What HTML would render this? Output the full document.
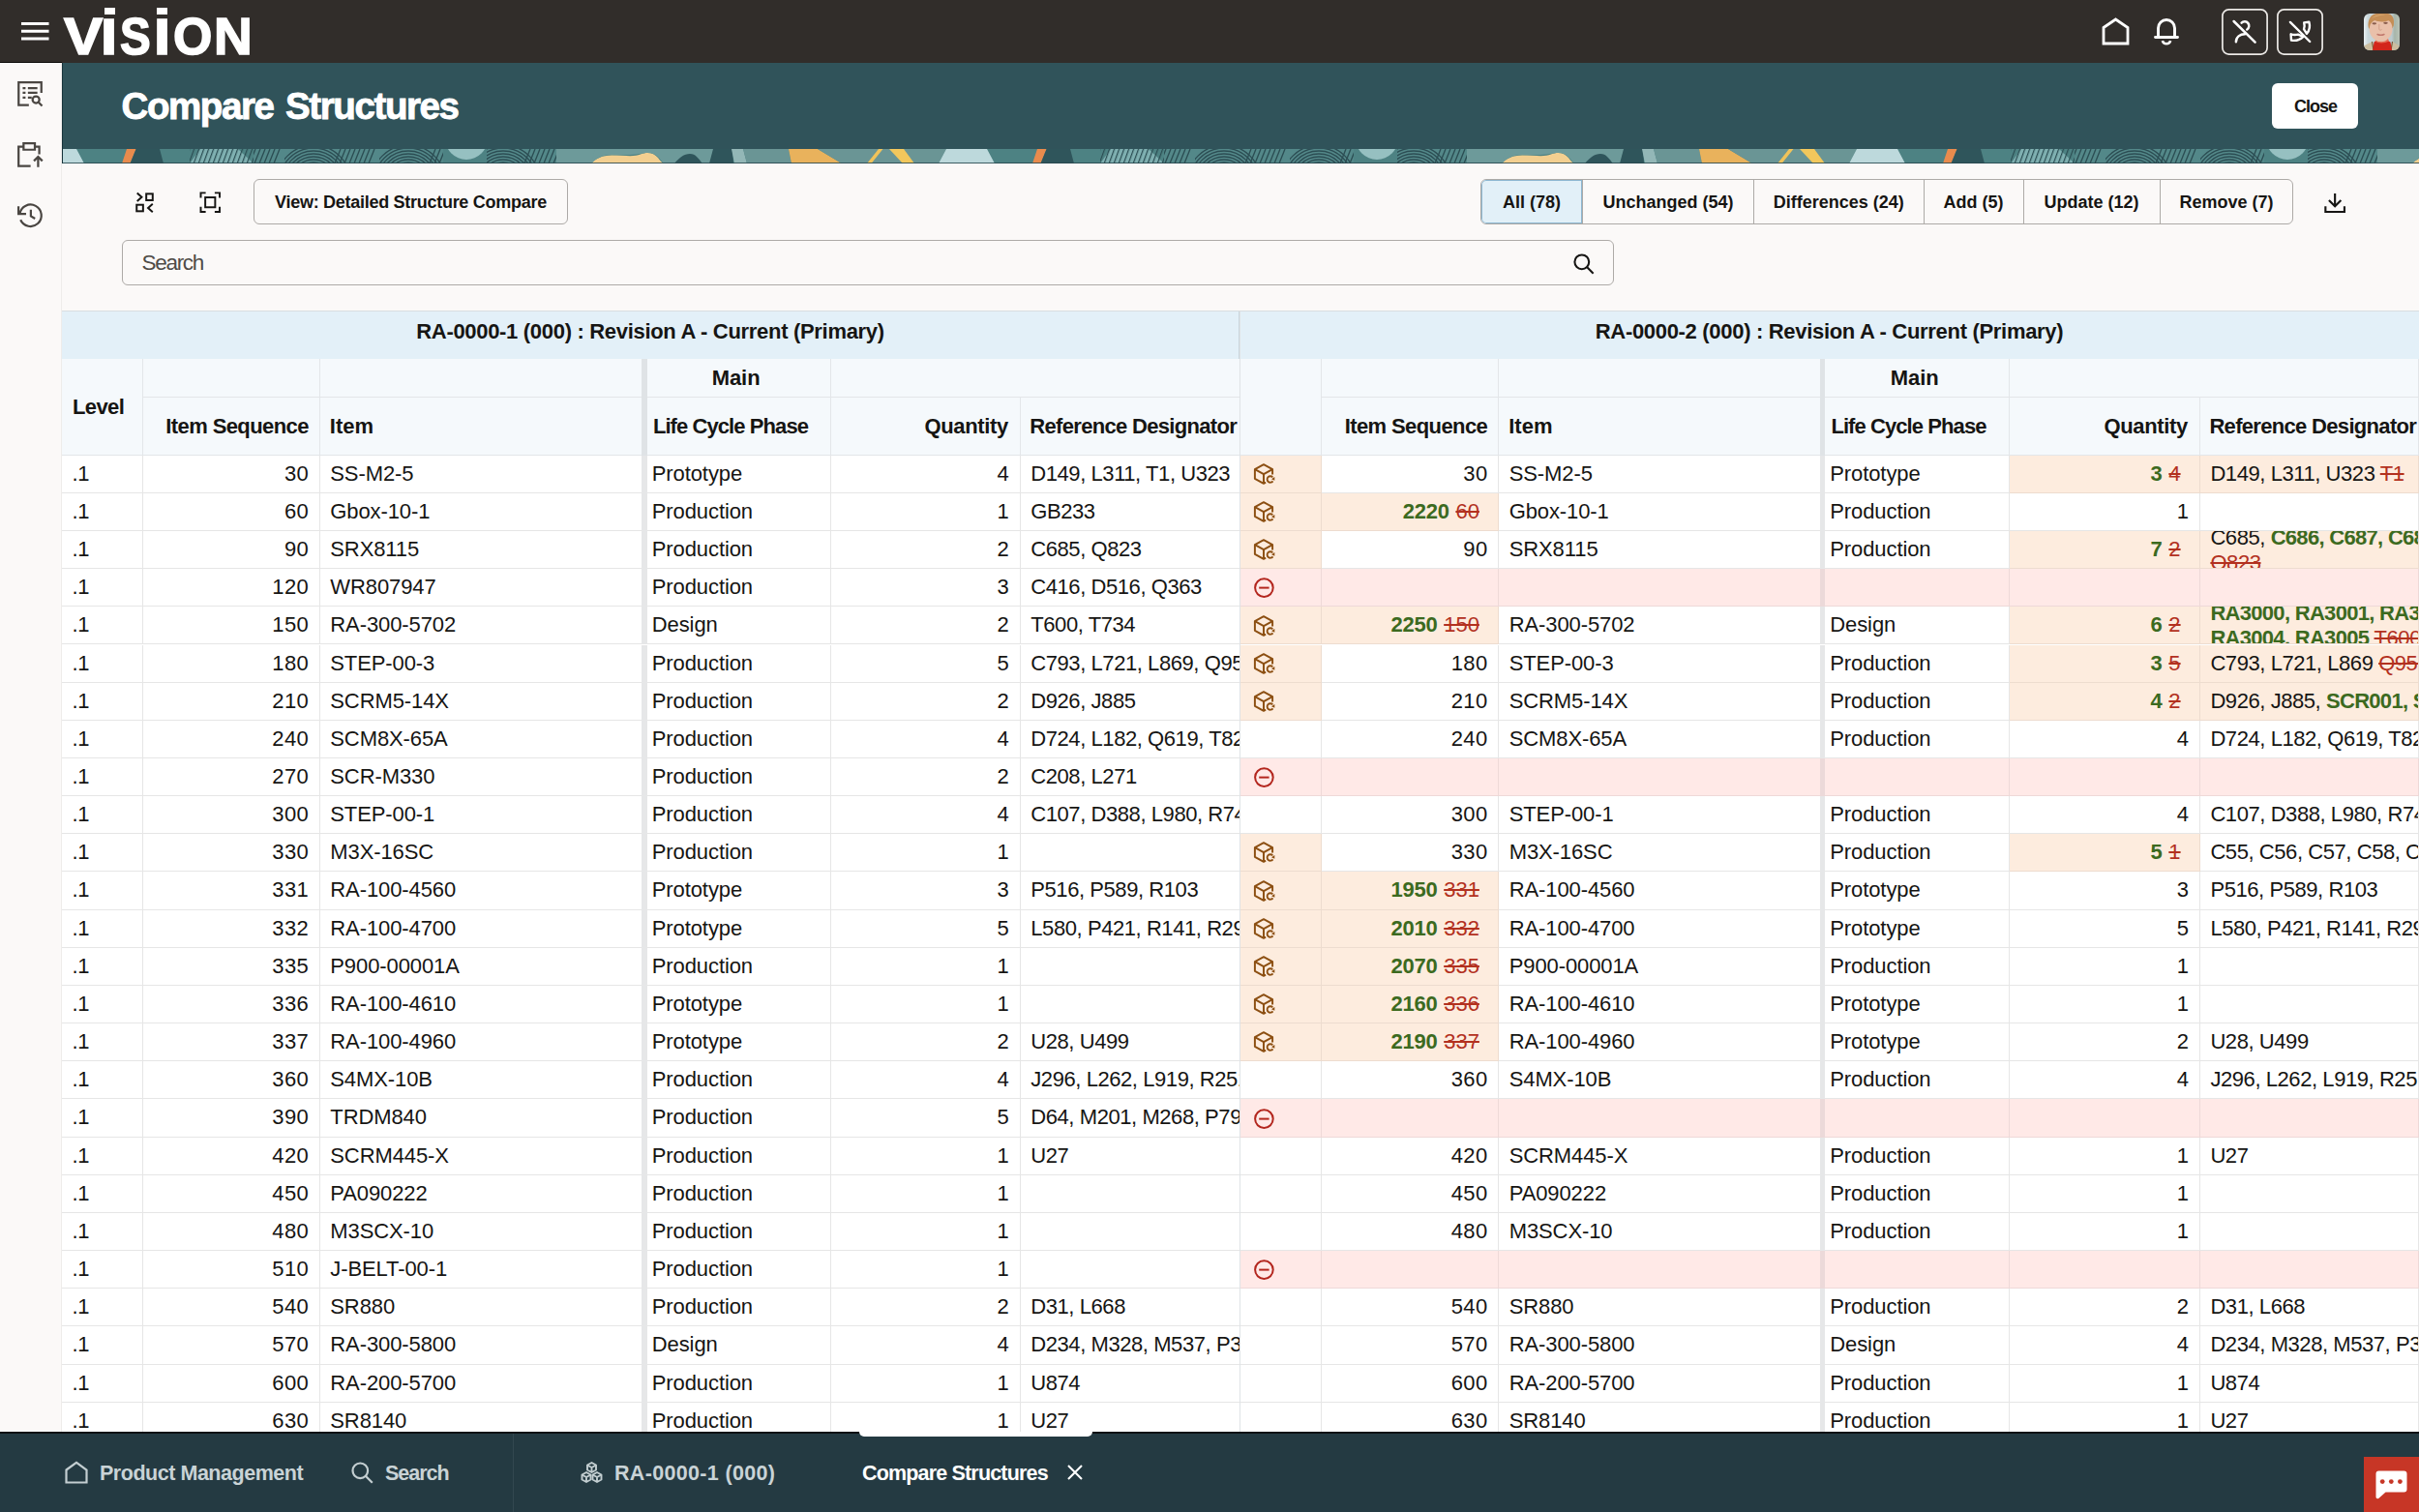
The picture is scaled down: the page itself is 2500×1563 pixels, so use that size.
<!DOCTYPE html>
<html lang="en">
<head>
<meta charset="utf-8">
<title>Compare Structures</title>
<style>
*{box-sizing:border-box;margin:0;padding:0}
html,body{width:2500px;height:1563px;overflow:hidden;background:#fbf9f8}
body{position:relative;font-family:"Liberation Sans",sans-serif;color:#161513;font-size:22px}
.abs{position:absolute}
svg{display:block;overflow:visible}
/* top bar */
#top{left:0;top:0;width:2500px;height:65px;background:#312d2a}
#logo span{position:absolute;top:0;font-weight:700;font-size:54px;line-height:54px;color:#fff;transform-origin:0 0;-webkit-text-stroke:1.6px #fff}
#logo i{position:absolute;background:#fff;display:block}
.tbtn{position:absolute;top:9px;width:48px;height:48px}
/* sidebar */
#side{left:0;top:65px;width:64px;height:1416px;background:#fbf9f8;border-right:1px solid #eeecea}
/* header */
#hdr{left:64px;top:65px;width:2436px;height:89px;background:#30535a}
#hdr h1{position:absolute;left:61.5px;top:24.600px;font-size:38.5px;line-height:40px;font-weight:700;color:#fff;letter-spacing:-1.400px;word-spacing:3.200px;white-space:nowrap;-webkit-text-stroke:0.900px #fff}
#close{position:absolute;left:2348px;top:86px;width:89px;height:47px;background:#fff;border-radius:6px;font-size:18px;font-weight:700;display:flex;align-items:center;justify-content:center;letter-spacing:-1px;padding-left:1px;padding-top:2px}
#strip{left:64px;top:154px;width:2436px;height:15px;overflow:hidden}
/* toolbar */
.btn{position:absolute;border:1px solid #adaaa7;border-radius:6px;display:flex;align-items:center;justify-content:center;font-weight:700;font-size:18px;letter-spacing:-0.28px;white-space:nowrap;background:#fbf9f8}
#seg{left:1530px;top:185px;height:47px;width:840px;border:1px solid #adaaa7;border-radius:6px;overflow:hidden;display:block}
#seg div{position:absolute;top:0;height:45px;padding-top:1.500px;display:flex;align-items:center;justify-content:center;font-weight:700;font-size:18px;letter-spacing:0;border-left:1px solid #adaaa7;white-space:nowrap}
#seg div:first-child{border-left:0;background:#e2f0f8;box-shadow:inset 0 0 0 1px #8db7d1;border-radius:5px 0 0 5px}
#search{left:126px;top:248px;width:1542px;height:47px;border:1px solid #adaaa7;border-radius:6px;background:#fbf9f8}
#search span{position:absolute;left:19.500px;top:0;line-height:45px;font-size:22.500px;color:#4f4b47;letter-spacing:-1.300px}
/* table */
#tbl{left:64px;top:321px;width:2436px;height:1160px;background:#fff;overflow:hidden}
.t1{position:absolute;top:321px;height:50px;background:#e3f0f8;font-weight:700;font-size:22px;letter-spacing:-0.31px;display:flex;align-items:center;justify-content:center;white-space:nowrap;padding-bottom:7px}
.h{position:absolute;background:#f5f9fc;border-right:1px solid #e3e6e9;border-bottom:1px solid #e3e6e9;font-weight:700;font-size:22px;letter-spacing:-0.6px;display:flex;align-items:center;white-space:nowrap;overflow:hidden;padding:0 11px;z-index:2}
.h.n{justify-content:flex-end}
.h.ctr{justify-content:center}
.hd{position:absolute;background:#dfe3e6;z-index:2}
.row{position:absolute;left:0;width:2500px;height:39.16px}
.c{position:absolute;top:0;height:39.16px;border-right:1px solid #e6e6e6;border-bottom:1px solid #e6e6e6;background:#fff;padding:0 10.5px;line-height:38.200px;white-space:nowrap;overflow:hidden;letter-spacing:-0.3px}
.c.n{text-align:right;padding-right:10.600px;letter-spacing:0.400px}
.c.dv{background:#e6e7e8;border:0;padding:0}
.c.dvp{background:#ecd9d9}
.c.o{background:#fdecde;border-color:#eddccf}
.c.p{background:#ffe9e7;border-color:#eed9d8}
.c.ico{padding:0}
.c.cl{padding-right:0;letter-spacing:-0.43px}
.c.lc{padding-left:5.100px;letter-spacing:-0.1px}
.c.it{letter-spacing:-0.1px;border-right:0}
.ic{position:absolute;left:12.1px;top:7.2px;width:24px;height:24px}
.g{color:#3c6a1f;font-weight:700;letter-spacing:-0.7px}
.c.n .g{letter-spacing:-0.300px;margin-right:0.300px}
.c.n .r{letter-spacing:0}
.c.n.o{padding-right:19.3px}
.r{color:#b3311f;text-decoration:line-through;text-decoration-thickness:1.5px}
.wr{display:block;line-height:26px;margin-top:-6px;white-space:nowrap}
/* bottom bar */
#bot{left:0;top:1480px;width:2500px;height:83px;background:#243a42;border-top:2px solid #0c1114}
#bot .t{position:absolute;top:29px;font-weight:700;font-size:21.5px;line-height:24px;color:#c9d3d6;letter-spacing:-0.47px;white-space:nowrap}
#chat{left:2443px;top:1506px;width:57px;height:57px;background:#c73626}
</style>
</head>
<body>
<svg width="0" height="0" style="position:absolute">
 <defs>
  <g id="i-upd" fill="none" stroke="#8c4f12" stroke-width="1.95" stroke-linejoin="round" stroke-linecap="butt">
   <path d="M21.100 12.600V7.200L12 2.200 2.900 7.200v9.600L12 21.800l2.100-1.150"/>
   <path d="M2.900 7.200L12 12.200l9.100-5M12 12.200v9.600"/>
   <path d="M21.300 15.300A3.250 3.250 0 1 0 21.500 19.400" stroke-width="1.850"/>
   <path d="M23.300 14.900v3.900l-3.300-1.500z" fill="#8c4f12" stroke="none"/>
  </g>
  <g id="i-rem" fill="none" stroke="#b3261e" stroke-width="2">
   <circle cx="12.400" cy="12.600" r="9.300"/>
   <path d="M7.200 12.600h10.400"/>
  </g>
 </defs>
</svg>

<!-- TOP BAR -->
<div id="top" class="abs">
 <svg class="abs" style="left:22px;top:22px" width="29" height="20" viewBox="0 0 29 20"><path d="M0 2.5h28.5M0 10.3h28.5M0 18h28.5" stroke="#fff" stroke-width="3" fill="none"/></svg>
 <div id="logo" class="abs" style="left:0;top:0">
  <span style="left:66px;top:9.500px;transform:scaleX(1.116)">V</span>
  <span style="left:104.200px;top:10.500px;transform:scaleX(1.170);font-size:52.500px">I</span>
  <span style="left:124.300px;top:9.500px;transform:scaleX(0.880)">S</span>
  <span style="left:159px;top:10.500px;transform:scaleX(1.170);font-size:52.500px">I</span>
  <span style="left:178.800px;top:9.500px;transform:scaleX(0.960)">O</span>
  <span style="left:221.300px;top:9.500px;transform:scaleX(1.020)">N</span>
  <i style="left:108.2px;top:8px;width:11px;height:7px"></i>
  <i style="left:162px;top:8px;width:11px;height:7px"></i>
 </div>
 <!-- home -->
 <svg class="abs" style="left:2171px;top:17px" width="31" height="31" viewBox="0 0 31 31"><path d="M3 11.5L15.5 3 28 11.5V28H3z" fill="none" stroke="#fff" stroke-width="2.800" stroke-linejoin="miter"/></svg>
 <!-- bell -->
 <svg class="abs" style="left:2225px;top:16px" width="28" height="32" viewBox="0 0 28 32"><path d="M2.5 22.5h23M5.5 22V13a8.5 8.5 0 0 1 17 0v9" fill="none" stroke="#fff" stroke-width="2.900" stroke-linecap="round"/><path d="M9.8 26.2a4.4 4.4 0 0 0 8.4 0" fill="none" stroke="#fff" stroke-width="2.600"/></svg>
 <div class="tbtn" style="left:2296px">
  <svg class="abs" style="left:0;top:0" width="48" height="48" viewBox="0 0 48 48"><rect x="0.900" y="0.900" width="46.200" height="46.200" rx="6.500" fill="none" stroke="#ece9e6" stroke-width="1.700"/><g fill="none" stroke="#fff" stroke-width="2.500" stroke-linecap="round"><path d="M20.600 14.600A4.500 4.500 0 1 1 26.300 21.500"/><path d="M14.900 34.200C14.900 29.200 19 26.300 24 26.300"/><path d="M12.600 13L34.600 34.600"/></g></svg>
 </div>
 <div class="tbtn" style="left:2353px">
  <svg class="abs" style="left:0;top:0" width="48" height="48" viewBox="0 0 48 48"><rect x="0.900" y="0.900" width="46.200" height="46.200" rx="6.500" fill="none" stroke="#ece9e6" stroke-width="1.700"/><g fill="none" stroke="#fff" stroke-width="2.400" stroke-linecap="round" stroke-linejoin="round"><path d="M28.200 14.400L33.400 13.700C34.600 18 33.600 22.600 31 25.800L28 21.200C28.800 19 28.800 16.600 28.200 14.400Z"/><path d="M14.600 26.300L15 32.600C19.600 33.400 24.200 32 27.400 28.800L22 26.600C19.600 27.200 17 27.200 14.600 26.300Z"/><path d="M13.900 13.900L34.200 34"/></g></svg>
 </div>
 <!-- avatar -->
 <svg class="abs" style="left:2443px;top:14px" width="37" height="38" viewBox="0 0 37 38">
  <defs><clipPath id="av"><rect width="37" height="38" rx="6"/></clipPath>
  <linearGradient id="avb" x1="0" x2="1" y1="0" y2="0"><stop offset="0" stop-color="#e9eff1"/><stop offset="0.120" stop-color="#c9d7db"/><stop offset="0.780" stop-color="#bccbcf"/><stop offset="0.860" stop-color="#a7b5aa"/><stop offset="1" stop-color="#b9c3b6"/></linearGradient></defs>
  <g clip-path="url(#av)">
   <rect width="37" height="38" fill="url(#avb)"/>
   <path d="M0 38v-4.500l8.500-4.500 3 9zM37 38v-4.500l-7.500-4.500-2.500 9z" fill="#cbbd9f"/>
   <path d="M8.500 29l1.500 9M29.500 29l-1.500 9" stroke="#7a5636" stroke-width="1.200" fill="none"/>
   <path d="M9.200 38l1.300-8.500 4.500-2.500h7.500l5 2.500 1.500 8.500z" fill="#d3251b"/>
   <path d="M11.500 28.500c3 2.500 10 2.500 14.500 0l-1-2.500h-12z" fill="#e66a54"/>
   <path d="M12.500 22h11v5.500c-3 2.200-8 2.200-11 0z" fill="#dca58e"/>
   <ellipse cx="17.600" cy="15.500" rx="12" ry="13.300" fill="#e9c0aa"/>
   <path d="M4.800 14.500C3.500 7 7 0.500 13 0h12c4.500 1 7 5 5.800 12.500l-1.300 3c0-4-1.500-7-4-8.300-4 1.500-10 1.800-14-0.200-3.500 1.500-5.500 4-5.700 9z" fill="#c58e56"/>
   <path d="M8 5c3-3.500 9-4.500 14-3.500-5 0-10 1.500-14 3.500z" fill="#ddb07a"/>
   <ellipse cx="10.800" cy="10.300" rx="2.300" ry="1.100" fill="#8a5e4e"/><ellipse cx="22.500" cy="9.800" rx="2.300" ry="1.100" fill="#8a5e4e"/>
   <path d="M15.800 11v5.500c0.800 0.800 2 0.800 2.800 0" fill="none" stroke="#d3a08a" stroke-width="1"/>
   <path d="M14 21.500c2 0.900 5 0.900 7 0" fill="none" stroke="#c27a6e" stroke-width="1.400" stroke-linecap="round"/>
  </g>
 </svg>
</div>

<div class="abs" style="left:0;top:64px;width:64px;height:1px;background:#0a0908"></div>
<div class="abs" style="left:64px;top:65px;width:1px;height:104px;background:#17343b;z-index:2"></div>
<!-- SIDEBAR -->
<div id="side" class="abs">
 <svg class="abs" style="left:17px;top:18px" width="28.600" height="28.400" viewBox="0 0 29 29"><g fill="none" stroke="#4a4642" stroke-width="2.3"><path d="M13 26.300H2.200V2.200h24v11"/><path d="M6.500 8.200h3M12 8.200h10M6.500 13.200h3M12 13.200h10M6.500 18.200h3M12 18.200h4"/><circle cx="20.500" cy="20.500" r="3.600"/><path d="M23.200 23.200l3.800 3.800"/></g></svg>
 <svg class="abs" style="left:17px;top:81px" width="28.300" height="28.200" viewBox="0 0 29 29"><g fill="none" stroke="#4a4642" stroke-width="2.300"><path d="M15 26.300H2.200V5.800h5M19.500 5.800h4.700V14"/><path d="M7.500 9V2.200h12V9z"/><path d="M23 27.500V17M18.500 21l4.500-4.500 4.500 4.500"/></g></svg>
 <svg class="abs" style="left:16.800px;top:142.500px" width="28.800" height="28.800" viewBox="0 0 30 30"><g fill="none" stroke="#4a4642" stroke-width="2.300"><path d="M3.600 13.500a11.700 11.700 0 1 1 0.800 6.500"/><path d="M2.200 5.500v8.200h8.200"/><path d="M15.500 9v7l4.500 2.800"/></g></svg>
</div>

<!-- HEADER -->
<div id="hdr" class="abs"><h1>Compare Structures</h1></div>
<div id="close">Close</div>
<div id="strip" class="abs"><svg width="2436" height="15" viewBox="0 0 2436 15"><defs><pattern id="hat" width="5" height="15" patternUnits="userSpaceOnUse" patternTransform="skewX(-20)"><rect x="0" y="0" width="1.300" height="15" fill="#2b4d53"/></pattern><pattern id="arc" width="98" height="15" patternUnits="userSpaceOnUse"><rect width="98" height="15" fill="#538889"/><g fill="none" stroke="#2b4d53" stroke-width="1.350"><circle cx="30" cy="34" r="20"/><circle cx="30" cy="34" r="23"/><circle cx="30" cy="34" r="26"/><circle cx="30" cy="34" r="29"/><circle cx="30" cy="34" r="32"/><circle cx="30" cy="34" r="35"/><circle cx="30" cy="34" r="38"/><path d="M58 0l-6 15"/><path d="M63 0l-6 15"/><path d="M68 0l-6 15"/><path d="M73 0l-6 15"/><path d="M78 0l-6 15"/><path d="M83 0l-6 15"/><path d="M88 0l-6 15"/><path d="M93 0l-6 15"/></g></pattern><g id="tl"><rect x="87" y="0" width="941" height="15" fill="#4d8283"/>
<polygon points="131.0,0.0 140.6,0.0 134.5,15.0 126.0,15.0" fill="#e88b4d"/>
<polygon points="140.6,0.0 165.0,0.0 169.0,15.0 134.5,15.0" fill="#2f555b"/>
<polygon points="207.0,0.0 246.0,0.0 262.0,15.0 196.0,15.0" fill="#7fb0b1"/>
<rect x="196" y="0" width="66" height="15" fill="url(#hat)"/>
<rect x="262" y="0" width="196" height="15" fill="url(#arc)"/>
<circle cx="482" cy="-11" r="22" fill="#96c0c1"/>
<rect x="503" y="0" width="72" height="15" fill="url(#arc)"/>
<rect x="575" y="0" width="40" height="15" fill="#6d9a9a"/>
<path d="M611 15C616 10 622 6.500 632 6.500C645 6.500 655 8.500 662 5.500C669 2.500 676 4 680 9C682 12 684 14 686 15Z" fill="#f3cf90"/>
<rect x="686" y="0" width="52" height="15" fill="#6d9a9a"/>
<path d="M615 0H686V15C682 10 677 3 668 4C660 5 652 7 632 6C622 6 616 10 611 15Z" fill="#6d9a9a"/>
<path d="M697 15C702 9 707 5 713 5C719 5 722 10 726 15Z" fill="#2f555b"/>
<polygon points="737.0,0.0 757.0,0.0 758.0,15.0 733.0,15.0" fill="#2f555b"/>
<polygon points="756.0,0.0 768.0,0.0 772.0,15.0 759.0,15.0" fill="#93b7b7"/>
<polygon points="768.0,0.0 815.0,0.0 818.0,15.0 772.0,15.0" fill="#6a9595"/>
<polygon points="815.0,0.0 845.0,0.0 870.0,15.0 818.0,15.0" fill="#e9b25c"/>
<polygon points="845.0,0.0 978.0,0.0 970.0,15.0 870.0,15.0" fill="#6a9595"/>
<polygon points="908.0,0.0 912.5,0.0 900.5,15.0 896.0,15.0" fill="#f0c35a"/>
<polygon points="919.0,0.0 934.0,0.0 945.0,15.0 933.0,15.0" fill="#f2c75c"/>
<polygon points="978.0,0.0 1020.0,0.0 1028.0,15.0 970.0,15.0" fill="#bdd9dc"/></g></defs><use href="#tl" x="-1005"/><use href="#tl" x="-64"/><use href="#tl" x="877"/><use href="#tl" x="1818"/><rect x="0" y="14" width="2436" height="1" fill="#27474d" opacity="0.85"/></svg></div>

<!-- TOOLBAR -->
<svg class="abs" style="left:139px;top:198.300px" width="21.500" height="22.700" viewBox="0 0 22 24"><g fill="none" stroke="#161513" stroke-width="2.100"><rect x="12.500" y="2.500" width="7" height="7"/><rect x="2" y="14.500" width="7" height="7"/><path d="M2.500 1.500l5 4.500-5 4.500M19.500 13.500l-5 4.500 5 4.500"/></g></svg>
<svg class="abs" style="left:205.800px;top:198.300px" width="22.500" height="22.300" viewBox="0 0 24 24"><g fill="none" stroke="#161513" stroke-width="2.100"><rect x="6.500" y="6.500" width="11" height="11"/><path d="M1.500 7V1.500H7M17 1.500h5.500V7M22.500 17v5.500H17M7 22.500H1.500V17"/></g></svg>
<div class="btn" style="left:262px;top:185px;width:325px;height:47px;padding-top:1.5px">View: Detailed Structure Compare</div>
<div id="seg" class="abs">
 <div style="left:0;width:104px">All (78)</div>
 <div style="left:104px;width:177px">Unchanged (54)</div>
 <div style="left:281px;width:175.500px">Differences (24)</div>
 <div style="left:456.500px;width:103px">Add (5)</div>
 <div style="left:559.500px;width:141px">Update (12)</div>
 <div style="left:700.500px;width:138px">Remove (7)</div>
</div>
<svg class="abs" style="left:2402.300px;top:198.600px" width="22.300" height="21.400" viewBox="0 0 25 24"><g fill="none" stroke="#161513" stroke-width="2.400"><path d="M12.500 1v14.500M5.500 9l7 7 7-7"/><path d="M1.500 16v6.500h22V16"/></g></svg>
<div id="search" class="abs"><span>Search</span>
 <svg class="abs" style="left:1498.500px;top:12.500px" width="21.800" height="21.800" viewBox="0 0 23 23"><g fill="none" stroke="#161513" stroke-width="2.200"><circle cx="9.300" cy="9.300" r="7.800"/><path d="M14.800 14.800l7 7"/></g></svg>
</div>

<!-- TABLE -->
<div id="tbl" class="abs"></div>
<div class="abs" style="left:64px;top:321px;width:2436px;height:1px;background:#d9dde0;z-index:3"></div>
<div class="t1" style="left:64px;width:1217px;border-right:1px solid #c9d6de">RA-0000-1 (000) : Revision A - Current (Primary)</div>
<div class="t1" style="left:1281px;width:1219px">RA-0000-2 (000) : Revision A - Current (Primary)</div>
<div class="h " style="left:64.0px;top:371.0px;width:84.0px;height:100.0px">Level</div>
<div class="h " style="left:148.0px;top:371.0px;width:182.8px;height:40.0px"></div>
<div class="h " style="left:330.8px;top:371.0px;width:332.3px;height:40.0px;border-right:0"></div>
<div class="h ctr" style="left:663.1px;top:371.0px;width:196.0px;height:40.0px;letter-spacing:-0.06px">Main</div>
<div class="h " style="left:859.1px;top:371.0px;width:422.8px;height:40.0px"></div>
<div class="h n" style="left:148.0px;top:411.0px;width:182.8px;height:60.0px">Item Sequence</div>
<div class="h " style="left:330.8px;top:411.0px;width:332.3px;height:60.0px;border-right:0;letter-spacing:0.04px;padding-left:10px">Item</div>
<div class="h " style="left:668.7px;top:411.0px;width:190.4px;height:60.0px;padding-left:6.200px;letter-spacing:-0.92px">Life Cycle Phase</div>
<div class="h n" style="left:859.1px;top:411.0px;width:195.7px;height:60.0px;letter-spacing:-0.36px;padding-right:12px">Quantity</div>
<div class="h " style="left:1054.8px;top:411.0px;width:227.1px;height:60.0px;padding-right:0;letter-spacing:-0.68px;padding-left:9.5px">Reference Designator</div>
<div class="hd" style="left:663.1px;top:371.0px;width:5.6px;height:100.0px"></div>
<div class="h " style="left:1281.9px;top:371.0px;width:84.1px;height:100.0px"></div>
<div class="h " style="left:1366.0px;top:371.0px;width:183.2px;height:40.0px"></div>
<div class="h " style="left:1549.2px;top:371.0px;width:331.9px;height:40.0px;border-right:0"></div>
<div class="h ctr" style="left:1881.1px;top:371.0px;width:196.3px;height:40.0px;letter-spacing:-0.06px">Main</div>
<div class="h " style="left:2077.4px;top:371.0px;width:422.6px;height:40.0px"></div>
<div class="h n" style="left:1366.0px;top:411.0px;width:183.2px;height:60.0px">Item Sequence</div>
<div class="h " style="left:1549.2px;top:411.0px;width:331.9px;height:60.0px;border-right:0;letter-spacing:0.04px;padding-left:10px">Item</div>
<div class="h " style="left:1886.2px;top:411.0px;width:191.2px;height:60.0px;padding-left:6.200px;letter-spacing:-0.92px">Life Cycle Phase</div>
<div class="h n" style="left:2077.4px;top:411.0px;width:196.5px;height:60.0px;letter-spacing:-0.36px;padding-right:12px">Quantity</div>
<div class="h " style="left:2273.9px;top:411.0px;width:226.1px;height:60.0px;padding-right:0;letter-spacing:-0.68px;padding-left:9.5px">Reference Designator</div>
<div class="hd" style="left:1881.1px;top:371.0px;width:5.1px;height:100.0px"></div>
<div class="abs" style="left:1281px;top:321px;width:1px;height:1159px;background:#dfe3e6;z-index:2"></div>

<div id="rows" class="abs" style="left:0;top:0;width:2500px;height:1481px;overflow:hidden">
<div class="row" style="top:470.70px">
<div class="c " style="left:64.0px;width:84.0px">.1</div>
<div class="c n" style="left:148.0px;width:182.8px">30</div>
<div class="c it" style="left:330.8px;width:332.3px">SS-M2-5</div>
<div class="c dv" style="left:663.1px;width:5.6px"></div>
<div class="c lc" style="left:668.7px;width:190.4px">Prototype</div>
<div class="c n" style="left:859.1px;width:195.7px">4</div>
<div class="c cl" style="left:1054.8px;width:227.1px">D149, L311, T1, U323</div>
<div class="c ico o" style="left:1281.9px;width:84.1px"><svg class="ic" viewBox="0 0 24 24"><use href="#i-upd"/></svg></div>
<div class="c n" style="left:1366.0px;width:183.2px">30</div>
<div class="c it" style="left:1549.2px;width:331.9px">SS-M2-5</div>
<div class="c dv" style="left:1881.1px;width:5.1px"></div>
<div class="c lc" style="left:1886.2px;width:191.2px">Prototype</div>
<div class="c n o" style="left:2077.4px;width:196.5px"><b class="g">3</b> <s class="r">4</s></div>
<div class="c cl o" style="left:2273.9px;width:226.1px">D149, L311, U323 <s class="r">T1</s></div>
</div>
<div class="row" style="top:509.86px">
<div class="c " style="left:64.0px;width:84.0px">.1</div>
<div class="c n" style="left:148.0px;width:182.8px">60</div>
<div class="c it" style="left:330.8px;width:332.3px">Gbox-10-1</div>
<div class="c dv" style="left:663.1px;width:5.6px"></div>
<div class="c lc" style="left:668.7px;width:190.4px">Production</div>
<div class="c n" style="left:859.1px;width:195.7px">1</div>
<div class="c cl" style="left:1054.8px;width:227.1px">GB233</div>
<div class="c ico o" style="left:1281.9px;width:84.1px"><svg class="ic" viewBox="0 0 24 24"><use href="#i-upd"/></svg></div>
<div class="c n o" style="left:1366.0px;width:183.2px"><b class="g">2220</b> <s class="r">60</s></div>
<div class="c it" style="left:1549.2px;width:331.9px">Gbox-10-1</div>
<div class="c dv" style="left:1881.1px;width:5.1px"></div>
<div class="c lc" style="left:1886.2px;width:191.2px">Production</div>
<div class="c n" style="left:2077.4px;width:196.5px">1</div>
<div class="c cl" style="left:2273.9px;width:226.1px"></div>
</div>
<div class="row" style="top:549.02px">
<div class="c " style="left:64.0px;width:84.0px">.1</div>
<div class="c n" style="left:148.0px;width:182.8px">90</div>
<div class="c it" style="left:330.8px;width:332.3px">SRX8115</div>
<div class="c dv" style="left:663.1px;width:5.6px"></div>
<div class="c lc" style="left:668.7px;width:190.4px">Production</div>
<div class="c n" style="left:859.1px;width:195.7px">2</div>
<div class="c cl" style="left:1054.8px;width:227.1px">C685, Q823</div>
<div class="c ico o" style="left:1281.9px;width:84.1px"><svg class="ic" viewBox="0 0 24 24"><use href="#i-upd"/></svg></div>
<div class="c n" style="left:1366.0px;width:183.2px">90</div>
<div class="c it" style="left:1549.2px;width:331.9px">SRX8115</div>
<div class="c dv" style="left:1881.1px;width:5.1px"></div>
<div class="c lc" style="left:1886.2px;width:191.2px">Production</div>
<div class="c n o" style="left:2077.4px;width:196.5px"><b class="g">7</b> <s class="r">2</s></div>
<div class="c cl o" style="left:2273.9px;width:226.1px"><span class="wr">C685, <b class="g">C686, C687, C688,</b><br><s class="r">Q823</s></span></div>
</div>
<div class="row rem" style="top:588.18px">
<div class="c " style="left:64.0px;width:84.0px">.1</div>
<div class="c n" style="left:148.0px;width:182.8px">120</div>
<div class="c it" style="left:330.8px;width:332.3px">WR807947</div>
<div class="c dv" style="left:663.1px;width:5.6px"></div>
<div class="c lc" style="left:668.7px;width:190.4px">Production</div>
<div class="c n" style="left:859.1px;width:195.7px">3</div>
<div class="c cl" style="left:1054.8px;width:227.1px">C416, D516, Q363</div>
<div class="c p ico" style="left:1281.9px;width:84.1px"><svg class="ic" viewBox="0 0 24 24"><use href="#i-rem"/></svg></div>
<div class="c p" style="left:1366.0px;width:183.2px"></div>
<div class="c p it" style="left:1549.2px;width:331.9px"></div>
<div class="c dv dvp" style="left:1881.1px;width:5.1px"></div>
<div class="c p" style="left:1886.2px;width:191.2px"></div>
<div class="c p" style="left:2077.4px;width:196.5px"></div>
<div class="c p" style="left:2273.9px;width:226.1px"></div>
</div>
<div class="row" style="top:627.34px">
<div class="c " style="left:64.0px;width:84.0px">.1</div>
<div class="c n" style="left:148.0px;width:182.8px">150</div>
<div class="c it" style="left:330.8px;width:332.3px">RA-300-5702</div>
<div class="c dv" style="left:663.1px;width:5.6px"></div>
<div class="c lc" style="left:668.7px;width:190.4px">Design</div>
<div class="c n" style="left:859.1px;width:195.7px">2</div>
<div class="c cl" style="left:1054.8px;width:227.1px">T600, T734</div>
<div class="c ico o" style="left:1281.9px;width:84.1px"><svg class="ic" viewBox="0 0 24 24"><use href="#i-upd"/></svg></div>
<div class="c n o" style="left:1366.0px;width:183.2px"><b class="g">2250</b> <s class="r">150</s></div>
<div class="c it" style="left:1549.2px;width:331.9px">RA-300-5702</div>
<div class="c dv" style="left:1881.1px;width:5.1px"></div>
<div class="c lc" style="left:1886.2px;width:191.2px">Design</div>
<div class="c n o" style="left:2077.4px;width:196.5px"><b class="g">6</b> <s class="r">2</s></div>
<div class="c cl o" style="left:2273.9px;width:226.1px"><span class="wr"><b class="g">RA3000, RA3001, RA3002,</b><br><b class="g">RA3004, RA3005</b> <s class="r">T600, T734</s></span></div>
</div>
<div class="row" style="top:666.50px">
<div class="c " style="left:64.0px;width:84.0px">.1</div>
<div class="c n" style="left:148.0px;width:182.8px">180</div>
<div class="c it" style="left:330.8px;width:332.3px">STEP-00-3</div>
<div class="c dv" style="left:663.1px;width:5.6px"></div>
<div class="c lc" style="left:668.7px;width:190.4px">Production</div>
<div class="c n" style="left:859.1px;width:195.7px">5</div>
<div class="c cl" style="left:1054.8px;width:227.1px">C793, L721, L869, Q951</div>
<div class="c ico o" style="left:1281.9px;width:84.1px"><svg class="ic" viewBox="0 0 24 24"><use href="#i-upd"/></svg></div>
<div class="c n" style="left:1366.0px;width:183.2px">180</div>
<div class="c it" style="left:1549.2px;width:331.9px">STEP-00-3</div>
<div class="c dv" style="left:1881.1px;width:5.1px"></div>
<div class="c lc" style="left:1886.2px;width:191.2px">Production</div>
<div class="c n o" style="left:2077.4px;width:196.5px"><b class="g">3</b> <s class="r">5</s></div>
<div class="c cl o" style="left:2273.9px;width:226.1px">C793, L721, L869 <s class="r">Q951, R12</s></div>
</div>
<div class="row" style="top:705.66px">
<div class="c " style="left:64.0px;width:84.0px">.1</div>
<div class="c n" style="left:148.0px;width:182.8px">210</div>
<div class="c it" style="left:330.8px;width:332.3px">SCRM5-14X</div>
<div class="c dv" style="left:663.1px;width:5.6px"></div>
<div class="c lc" style="left:668.7px;width:190.4px">Production</div>
<div class="c n" style="left:859.1px;width:195.7px">2</div>
<div class="c cl" style="left:1054.8px;width:227.1px">D926, J885</div>
<div class="c ico o" style="left:1281.9px;width:84.1px"><svg class="ic" viewBox="0 0 24 24"><use href="#i-upd"/></svg></div>
<div class="c n" style="left:1366.0px;width:183.2px">210</div>
<div class="c it" style="left:1549.2px;width:331.9px">SCRM5-14X</div>
<div class="c dv" style="left:1881.1px;width:5.1px"></div>
<div class="c lc" style="left:1886.2px;width:191.2px">Production</div>
<div class="c n o" style="left:2077.4px;width:196.5px"><b class="g">4</b> <s class="r">2</s></div>
<div class="c cl o" style="left:2273.9px;width:226.1px">D926, J885, <b class="g">SCR001, SCR002</b></div>
</div>
<div class="row" style="top:744.82px">
<div class="c " style="left:64.0px;width:84.0px">.1</div>
<div class="c n" style="left:148.0px;width:182.8px">240</div>
<div class="c it" style="left:330.8px;width:332.3px">SCM8X-65A</div>
<div class="c dv" style="left:663.1px;width:5.6px"></div>
<div class="c lc" style="left:668.7px;width:190.4px">Production</div>
<div class="c n" style="left:859.1px;width:195.7px">4</div>
<div class="c cl" style="left:1054.8px;width:227.1px">D724, L182, Q619, T827</div>
<div class="c ico" style="left:1281.9px;width:84.1px"></div>
<div class="c n" style="left:1366.0px;width:183.2px">240</div>
<div class="c it" style="left:1549.2px;width:331.9px">SCM8X-65A</div>
<div class="c dv" style="left:1881.1px;width:5.1px"></div>
<div class="c lc" style="left:1886.2px;width:191.2px">Production</div>
<div class="c n" style="left:2077.4px;width:196.5px">4</div>
<div class="c cl" style="left:2273.9px;width:226.1px">D724, L182, Q619, T827</div>
</div>
<div class="row rem" style="top:783.98px">
<div class="c " style="left:64.0px;width:84.0px">.1</div>
<div class="c n" style="left:148.0px;width:182.8px">270</div>
<div class="c it" style="left:330.8px;width:332.3px">SCR-M330</div>
<div class="c dv" style="left:663.1px;width:5.6px"></div>
<div class="c lc" style="left:668.7px;width:190.4px">Production</div>
<div class="c n" style="left:859.1px;width:195.7px">2</div>
<div class="c cl" style="left:1054.8px;width:227.1px">C208, L271</div>
<div class="c p ico" style="left:1281.9px;width:84.1px"><svg class="ic" viewBox="0 0 24 24"><use href="#i-rem"/></svg></div>
<div class="c p" style="left:1366.0px;width:183.2px"></div>
<div class="c p it" style="left:1549.2px;width:331.9px"></div>
<div class="c dv dvp" style="left:1881.1px;width:5.1px"></div>
<div class="c p" style="left:1886.2px;width:191.2px"></div>
<div class="c p" style="left:2077.4px;width:196.5px"></div>
<div class="c p" style="left:2273.9px;width:226.1px"></div>
</div>
<div class="row" style="top:823.14px">
<div class="c " style="left:64.0px;width:84.0px">.1</div>
<div class="c n" style="left:148.0px;width:182.8px">300</div>
<div class="c it" style="left:330.8px;width:332.3px">STEP-00-1</div>
<div class="c dv" style="left:663.1px;width:5.6px"></div>
<div class="c lc" style="left:668.7px;width:190.4px">Production</div>
<div class="c n" style="left:859.1px;width:195.7px">4</div>
<div class="c cl" style="left:1054.8px;width:227.1px">C107, D388, L980, R741</div>
<div class="c ico" style="left:1281.9px;width:84.1px"></div>
<div class="c n" style="left:1366.0px;width:183.2px">300</div>
<div class="c it" style="left:1549.2px;width:331.9px">STEP-00-1</div>
<div class="c dv" style="left:1881.1px;width:5.1px"></div>
<div class="c lc" style="left:1886.2px;width:191.2px">Production</div>
<div class="c n" style="left:2077.4px;width:196.5px">4</div>
<div class="c cl" style="left:2273.9px;width:226.1px">C107, D388, L980, R741</div>
</div>
<div class="row" style="top:862.30px">
<div class="c " style="left:64.0px;width:84.0px">.1</div>
<div class="c n" style="left:148.0px;width:182.8px">330</div>
<div class="c it" style="left:330.8px;width:332.3px">M3X-16SC</div>
<div class="c dv" style="left:663.1px;width:5.6px"></div>
<div class="c lc" style="left:668.7px;width:190.4px">Production</div>
<div class="c n" style="left:859.1px;width:195.7px">1</div>
<div class="c cl" style="left:1054.8px;width:227.1px"></div>
<div class="c ico o" style="left:1281.9px;width:84.1px"><svg class="ic" viewBox="0 0 24 24"><use href="#i-upd"/></svg></div>
<div class="c n" style="left:1366.0px;width:183.2px">330</div>
<div class="c it" style="left:1549.2px;width:331.9px">M3X-16SC</div>
<div class="c dv" style="left:1881.1px;width:5.1px"></div>
<div class="c lc" style="left:1886.2px;width:191.2px">Production</div>
<div class="c n o" style="left:2077.4px;width:196.5px"><b class="g">5</b> <s class="r">1</s></div>
<div class="c cl" style="left:2273.9px;width:226.1px">C55, C56, C57, C58, C59</div>
</div>
<div class="row" style="top:901.46px">
<div class="c " style="left:64.0px;width:84.0px">.1</div>
<div class="c n" style="left:148.0px;width:182.8px">331</div>
<div class="c it" style="left:330.8px;width:332.3px">RA-100-4560</div>
<div class="c dv" style="left:663.1px;width:5.6px"></div>
<div class="c lc" style="left:668.7px;width:190.4px">Prototype</div>
<div class="c n" style="left:859.1px;width:195.7px">3</div>
<div class="c cl" style="left:1054.8px;width:227.1px">P516, P589, R103</div>
<div class="c ico o" style="left:1281.9px;width:84.1px"><svg class="ic" viewBox="0 0 24 24"><use href="#i-upd"/></svg></div>
<div class="c n o" style="left:1366.0px;width:183.2px"><b class="g">1950</b> <s class="r">331</s></div>
<div class="c it" style="left:1549.2px;width:331.9px">RA-100-4560</div>
<div class="c dv" style="left:1881.1px;width:5.1px"></div>
<div class="c lc" style="left:1886.2px;width:191.2px">Prototype</div>
<div class="c n" style="left:2077.4px;width:196.5px">3</div>
<div class="c cl" style="left:2273.9px;width:226.1px">P516, P589, R103</div>
</div>
<div class="row" style="top:940.62px">
<div class="c " style="left:64.0px;width:84.0px">.1</div>
<div class="c n" style="left:148.0px;width:182.8px">332</div>
<div class="c it" style="left:330.8px;width:332.3px">RA-100-4700</div>
<div class="c dv" style="left:663.1px;width:5.6px"></div>
<div class="c lc" style="left:668.7px;width:190.4px">Prototype</div>
<div class="c n" style="left:859.1px;width:195.7px">5</div>
<div class="c cl" style="left:1054.8px;width:227.1px">L580, P421, R141, R297</div>
<div class="c ico o" style="left:1281.9px;width:84.1px"><svg class="ic" viewBox="0 0 24 24"><use href="#i-upd"/></svg></div>
<div class="c n o" style="left:1366.0px;width:183.2px"><b class="g">2010</b> <s class="r">332</s></div>
<div class="c it" style="left:1549.2px;width:331.9px">RA-100-4700</div>
<div class="c dv" style="left:1881.1px;width:5.1px"></div>
<div class="c lc" style="left:1886.2px;width:191.2px">Prototype</div>
<div class="c n" style="left:2077.4px;width:196.5px">5</div>
<div class="c cl" style="left:2273.9px;width:226.1px">L580, P421, R141, R297</div>
</div>
<div class="row" style="top:979.78px">
<div class="c " style="left:64.0px;width:84.0px">.1</div>
<div class="c n" style="left:148.0px;width:182.8px">335</div>
<div class="c it" style="left:330.8px;width:332.3px">P900-00001A</div>
<div class="c dv" style="left:663.1px;width:5.6px"></div>
<div class="c lc" style="left:668.7px;width:190.4px">Production</div>
<div class="c n" style="left:859.1px;width:195.7px">1</div>
<div class="c cl" style="left:1054.8px;width:227.1px"></div>
<div class="c ico o" style="left:1281.9px;width:84.1px"><svg class="ic" viewBox="0 0 24 24"><use href="#i-upd"/></svg></div>
<div class="c n o" style="left:1366.0px;width:183.2px"><b class="g">2070</b> <s class="r">335</s></div>
<div class="c it" style="left:1549.2px;width:331.9px">P900-00001A</div>
<div class="c dv" style="left:1881.1px;width:5.1px"></div>
<div class="c lc" style="left:1886.2px;width:191.2px">Production</div>
<div class="c n" style="left:2077.4px;width:196.5px">1</div>
<div class="c cl" style="left:2273.9px;width:226.1px"></div>
</div>
<div class="row" style="top:1018.94px">
<div class="c " style="left:64.0px;width:84.0px">.1</div>
<div class="c n" style="left:148.0px;width:182.8px">336</div>
<div class="c it" style="left:330.8px;width:332.3px">RA-100-4610</div>
<div class="c dv" style="left:663.1px;width:5.6px"></div>
<div class="c lc" style="left:668.7px;width:190.4px">Prototype</div>
<div class="c n" style="left:859.1px;width:195.7px">1</div>
<div class="c cl" style="left:1054.8px;width:227.1px"></div>
<div class="c ico o" style="left:1281.9px;width:84.1px"><svg class="ic" viewBox="0 0 24 24"><use href="#i-upd"/></svg></div>
<div class="c n o" style="left:1366.0px;width:183.2px"><b class="g">2160</b> <s class="r">336</s></div>
<div class="c it" style="left:1549.2px;width:331.9px">RA-100-4610</div>
<div class="c dv" style="left:1881.1px;width:5.1px"></div>
<div class="c lc" style="left:1886.2px;width:191.2px">Prototype</div>
<div class="c n" style="left:2077.4px;width:196.5px">1</div>
<div class="c cl" style="left:2273.9px;width:226.1px"></div>
</div>
<div class="row" style="top:1058.10px">
<div class="c " style="left:64.0px;width:84.0px">.1</div>
<div class="c n" style="left:148.0px;width:182.8px">337</div>
<div class="c it" style="left:330.8px;width:332.3px">RA-100-4960</div>
<div class="c dv" style="left:663.1px;width:5.6px"></div>
<div class="c lc" style="left:668.7px;width:190.4px">Prototype</div>
<div class="c n" style="left:859.1px;width:195.7px">2</div>
<div class="c cl" style="left:1054.8px;width:227.1px">U28, U499</div>
<div class="c ico o" style="left:1281.9px;width:84.1px"><svg class="ic" viewBox="0 0 24 24"><use href="#i-upd"/></svg></div>
<div class="c n o" style="left:1366.0px;width:183.2px"><b class="g">2190</b> <s class="r">337</s></div>
<div class="c it" style="left:1549.2px;width:331.9px">RA-100-4960</div>
<div class="c dv" style="left:1881.1px;width:5.1px"></div>
<div class="c lc" style="left:1886.2px;width:191.2px">Prototype</div>
<div class="c n" style="left:2077.4px;width:196.5px">2</div>
<div class="c cl" style="left:2273.9px;width:226.1px">U28, U499</div>
</div>
<div class="row" style="top:1097.26px">
<div class="c " style="left:64.0px;width:84.0px">.1</div>
<div class="c n" style="left:148.0px;width:182.8px">360</div>
<div class="c it" style="left:330.8px;width:332.3px">S4MX-10B</div>
<div class="c dv" style="left:663.1px;width:5.6px"></div>
<div class="c lc" style="left:668.7px;width:190.4px">Production</div>
<div class="c n" style="left:859.1px;width:195.7px">4</div>
<div class="c cl" style="left:1054.8px;width:227.1px">J296, L262, L919, R251</div>
<div class="c ico" style="left:1281.9px;width:84.1px"></div>
<div class="c n" style="left:1366.0px;width:183.2px">360</div>
<div class="c it" style="left:1549.2px;width:331.9px">S4MX-10B</div>
<div class="c dv" style="left:1881.1px;width:5.1px"></div>
<div class="c lc" style="left:1886.2px;width:191.2px">Production</div>
<div class="c n" style="left:2077.4px;width:196.5px">4</div>
<div class="c cl" style="left:2273.9px;width:226.1px">J296, L262, L919, R251</div>
</div>
<div class="row rem" style="top:1136.42px">
<div class="c " style="left:64.0px;width:84.0px">.1</div>
<div class="c n" style="left:148.0px;width:182.8px">390</div>
<div class="c it" style="left:330.8px;width:332.3px">TRDM840</div>
<div class="c dv" style="left:663.1px;width:5.6px"></div>
<div class="c lc" style="left:668.7px;width:190.4px">Production</div>
<div class="c n" style="left:859.1px;width:195.7px">5</div>
<div class="c cl" style="left:1054.8px;width:227.1px">D64, M201, M268, P791</div>
<div class="c p ico" style="left:1281.9px;width:84.1px"><svg class="ic" viewBox="0 0 24 24"><use href="#i-rem"/></svg></div>
<div class="c p" style="left:1366.0px;width:183.2px"></div>
<div class="c p it" style="left:1549.2px;width:331.9px"></div>
<div class="c dv dvp" style="left:1881.1px;width:5.1px"></div>
<div class="c p" style="left:1886.2px;width:191.2px"></div>
<div class="c p" style="left:2077.4px;width:196.5px"></div>
<div class="c p" style="left:2273.9px;width:226.1px"></div>
</div>
<div class="row" style="top:1175.58px">
<div class="c " style="left:64.0px;width:84.0px">.1</div>
<div class="c n" style="left:148.0px;width:182.8px">420</div>
<div class="c it" style="left:330.8px;width:332.3px">SCRM445-X</div>
<div class="c dv" style="left:663.1px;width:5.6px"></div>
<div class="c lc" style="left:668.7px;width:190.4px">Production</div>
<div class="c n" style="left:859.1px;width:195.7px">1</div>
<div class="c cl" style="left:1054.8px;width:227.1px">U27</div>
<div class="c ico" style="left:1281.9px;width:84.1px"></div>
<div class="c n" style="left:1366.0px;width:183.2px">420</div>
<div class="c it" style="left:1549.2px;width:331.9px">SCRM445-X</div>
<div class="c dv" style="left:1881.1px;width:5.1px"></div>
<div class="c lc" style="left:1886.2px;width:191.2px">Production</div>
<div class="c n" style="left:2077.4px;width:196.5px">1</div>
<div class="c cl" style="left:2273.9px;width:226.1px">U27</div>
</div>
<div class="row" style="top:1214.74px">
<div class="c " style="left:64.0px;width:84.0px">.1</div>
<div class="c n" style="left:148.0px;width:182.8px">450</div>
<div class="c it" style="left:330.8px;width:332.3px">PA090222</div>
<div class="c dv" style="left:663.1px;width:5.6px"></div>
<div class="c lc" style="left:668.7px;width:190.4px">Production</div>
<div class="c n" style="left:859.1px;width:195.7px">1</div>
<div class="c cl" style="left:1054.8px;width:227.1px"></div>
<div class="c ico" style="left:1281.9px;width:84.1px"></div>
<div class="c n" style="left:1366.0px;width:183.2px">450</div>
<div class="c it" style="left:1549.2px;width:331.9px">PA090222</div>
<div class="c dv" style="left:1881.1px;width:5.1px"></div>
<div class="c lc" style="left:1886.2px;width:191.2px">Production</div>
<div class="c n" style="left:2077.4px;width:196.5px">1</div>
<div class="c cl" style="left:2273.9px;width:226.1px"></div>
</div>
<div class="row" style="top:1253.90px">
<div class="c " style="left:64.0px;width:84.0px">.1</div>
<div class="c n" style="left:148.0px;width:182.8px">480</div>
<div class="c it" style="left:330.8px;width:332.3px">M3SCX-10</div>
<div class="c dv" style="left:663.1px;width:5.6px"></div>
<div class="c lc" style="left:668.7px;width:190.4px">Production</div>
<div class="c n" style="left:859.1px;width:195.7px">1</div>
<div class="c cl" style="left:1054.8px;width:227.1px"></div>
<div class="c ico" style="left:1281.9px;width:84.1px"></div>
<div class="c n" style="left:1366.0px;width:183.2px">480</div>
<div class="c it" style="left:1549.2px;width:331.9px">M3SCX-10</div>
<div class="c dv" style="left:1881.1px;width:5.1px"></div>
<div class="c lc" style="left:1886.2px;width:191.2px">Production</div>
<div class="c n" style="left:2077.4px;width:196.5px">1</div>
<div class="c cl" style="left:2273.9px;width:226.1px"></div>
</div>
<div class="row rem" style="top:1293.06px">
<div class="c " style="left:64.0px;width:84.0px">.1</div>
<div class="c n" style="left:148.0px;width:182.8px">510</div>
<div class="c it" style="left:330.8px;width:332.3px">J-BELT-00-1</div>
<div class="c dv" style="left:663.1px;width:5.6px"></div>
<div class="c lc" style="left:668.7px;width:190.4px">Production</div>
<div class="c n" style="left:859.1px;width:195.7px">1</div>
<div class="c cl" style="left:1054.8px;width:227.1px"></div>
<div class="c p ico" style="left:1281.9px;width:84.1px"><svg class="ic" viewBox="0 0 24 24"><use href="#i-rem"/></svg></div>
<div class="c p" style="left:1366.0px;width:183.2px"></div>
<div class="c p it" style="left:1549.2px;width:331.9px"></div>
<div class="c dv dvp" style="left:1881.1px;width:5.1px"></div>
<div class="c p" style="left:1886.2px;width:191.2px"></div>
<div class="c p" style="left:2077.4px;width:196.5px"></div>
<div class="c p" style="left:2273.9px;width:226.1px"></div>
</div>
<div class="row" style="top:1332.22px">
<div class="c " style="left:64.0px;width:84.0px">.1</div>
<div class="c n" style="left:148.0px;width:182.8px">540</div>
<div class="c it" style="left:330.8px;width:332.3px">SR880</div>
<div class="c dv" style="left:663.1px;width:5.6px"></div>
<div class="c lc" style="left:668.7px;width:190.4px">Production</div>
<div class="c n" style="left:859.1px;width:195.7px">2</div>
<div class="c cl" style="left:1054.8px;width:227.1px">D31, L668</div>
<div class="c ico" style="left:1281.9px;width:84.1px"></div>
<div class="c n" style="left:1366.0px;width:183.2px">540</div>
<div class="c it" style="left:1549.2px;width:331.9px">SR880</div>
<div class="c dv" style="left:1881.1px;width:5.1px"></div>
<div class="c lc" style="left:1886.2px;width:191.2px">Production</div>
<div class="c n" style="left:2077.4px;width:196.5px">2</div>
<div class="c cl" style="left:2273.9px;width:226.1px">D31, L668</div>
</div>
<div class="row" style="top:1371.38px">
<div class="c " style="left:64.0px;width:84.0px">.1</div>
<div class="c n" style="left:148.0px;width:182.8px">570</div>
<div class="c it" style="left:330.8px;width:332.3px">RA-300-5800</div>
<div class="c dv" style="left:663.1px;width:5.6px"></div>
<div class="c lc" style="left:668.7px;width:190.4px">Design</div>
<div class="c n" style="left:859.1px;width:195.7px">4</div>
<div class="c cl" style="left:1054.8px;width:227.1px">D234, M328, M537, P312</div>
<div class="c ico" style="left:1281.9px;width:84.1px"></div>
<div class="c n" style="left:1366.0px;width:183.2px">570</div>
<div class="c it" style="left:1549.2px;width:331.9px">RA-300-5800</div>
<div class="c dv" style="left:1881.1px;width:5.1px"></div>
<div class="c lc" style="left:1886.2px;width:191.2px">Design</div>
<div class="c n" style="left:2077.4px;width:196.5px">4</div>
<div class="c cl" style="left:2273.9px;width:226.1px">D234, M328, M537, P312</div>
</div>
<div class="row" style="top:1410.54px">
<div class="c " style="left:64.0px;width:84.0px">.1</div>
<div class="c n" style="left:148.0px;width:182.8px">600</div>
<div class="c it" style="left:330.8px;width:332.3px">RA-200-5700</div>
<div class="c dv" style="left:663.1px;width:5.6px"></div>
<div class="c lc" style="left:668.7px;width:190.4px">Production</div>
<div class="c n" style="left:859.1px;width:195.7px">1</div>
<div class="c cl" style="left:1054.8px;width:227.1px">U874</div>
<div class="c ico" style="left:1281.9px;width:84.1px"></div>
<div class="c n" style="left:1366.0px;width:183.2px">600</div>
<div class="c it" style="left:1549.2px;width:331.9px">RA-200-5700</div>
<div class="c dv" style="left:1881.1px;width:5.1px"></div>
<div class="c lc" style="left:1886.2px;width:191.2px">Production</div>
<div class="c n" style="left:2077.4px;width:196.5px">1</div>
<div class="c cl" style="left:2273.9px;width:226.1px">U874</div>
</div>
<div class="row" style="top:1449.70px">
<div class="c " style="left:64.0px;width:84.0px">.1</div>
<div class="c n" style="left:148.0px;width:182.8px">630</div>
<div class="c it" style="left:330.8px;width:332.3px">SR8140</div>
<div class="c dv" style="left:663.1px;width:5.6px"></div>
<div class="c lc" style="left:668.7px;width:190.4px">Production</div>
<div class="c n" style="left:859.1px;width:195.7px">1</div>
<div class="c cl" style="left:1054.8px;width:227.1px">U27</div>
<div class="c ico" style="left:1281.9px;width:84.1px"></div>
<div class="c n" style="left:1366.0px;width:183.2px">630</div>
<div class="c it" style="left:1549.2px;width:331.9px">SR8140</div>
<div class="c dv" style="left:1881.1px;width:5.1px"></div>
<div class="c lc" style="left:1886.2px;width:191.2px">Production</div>
<div class="c n" style="left:2077.4px;width:196.5px">1</div>
<div class="c cl" style="left:2273.9px;width:226.1px">U27</div>
</div>
</div>

<!-- BOTTOM BAR -->
<div id="bot" class="abs">
 <svg class="abs" style="left:67px;top:28px" width="24" height="24" viewBox="0 0 24 24"><path d="M1.500 9.500L12 1.800l10.500 7.700V22.500h-21z" fill="none" stroke="#c3ced1" stroke-width="2.200"/></svg>
 <div class="t" style="left:103px">Product Management</div>
 <svg class="abs" style="left:363px;top:29px" width="23" height="23" viewBox="0 0 23 23"><g fill="none" stroke="#c3ced1" stroke-width="2.200"><circle cx="9.300" cy="9.300" r="7.800"/><path d="M14.800 14.800l7 7"/></g></svg>
 <div class="t" style="left:398px;letter-spacing:-1px">Search</div>
 <div class="abs" style="left:530px;top:0;width:1px;height:81px;background:#33484f"></div>
 <svg class="abs" style="left:600px;top:29px" width="23" height="22" viewBox="0 0 23 22"><g fill="none" stroke="#c3ced1" stroke-width="1.900" stroke-linejoin="round"><path d="M11.500 1l4.500 2.500v5L11.500 11 7 8.500v-5z"/><path d="M6 11l4.500 2.500v5L6 21 1.500 18.500v-5z"/><path d="M17 11l4.500 2.500v5L17 21l-4.500-2.500v-5z"/><path d="M7 3.500L11.500 6 16 3.500M11.500 6v5M1.500 13.500L6 16l4.500-2.500M6 16v5M12.500 13.500L17 16l4.500-2.500M17 16v5"/></g></svg>
 <div class="t" style="left:635px;letter-spacing:0.33px">RA-0000-1 (000)</div>
 <div class="abs" style="left:888px;top:-2px;width:241px;height:5px;background:#fff;border-radius:0 0 5px 5px"></div>
 <div class="t" style="left:891px;color:#fff;letter-spacing:-0.83px">Compare Structures</div>
 <svg class="abs" style="left:1103px;top:32px" width="16" height="16" viewBox="0 0 16 16"><path d="M1 1l14 14M15 1L1 15" stroke="#fff" stroke-width="2.100" fill="none"/></svg>
</div>
<div id="chat" class="abs">
 <svg class="abs" style="left:12px;top:14px" width="33" height="30" viewBox="0 0 33 30"><path d="M3.500 0.500h26a3 3 0 0 1 3 3v16a3 3 0 0 1-3 3H10.500L3.500 28.800a1.800 1.800 0 0 1-3-1.300V3.500a3 3 0 0 1 3-3z" fill="#fff"/><circle cx="7.200" cy="11.600" r="2.400" fill="#c73626"/><circle cx="16.300" cy="11.600" r="2.400" fill="#c73626"/><circle cx="25.400" cy="11.600" r="2.400" fill="#c73626"/></svg>
</div>
</body>
</html>
